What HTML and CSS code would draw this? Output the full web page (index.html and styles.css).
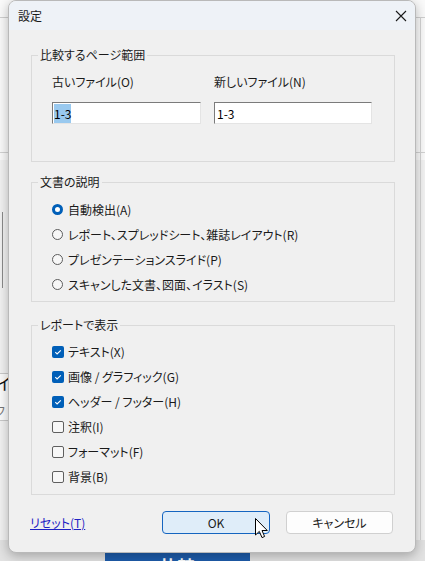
FILE: index.html
```html
<!DOCTYPE html>
<html lang="ja">
<head>
<meta charset="utf-8">
<title>設定</title>
<link rel="stylesheet" href="styles.css">
</head>
<body>
<div class="desk">
  <div class="bg bg-top-left"></div>
  <div class="bg bg-line-l1"></div>
  <div class="bg bg-line-l2"></div>
  <div class="bg bg-dash"></div>
  <div class="bg bg-band"></div>
  <div class="bg bg-glyph1">イ</div>
  <div class="bg bg-glyph2">フ</div>
  <div class="bg bg-vline-r"></div>
  <div class="bg bg-bottom"></div>
  <div class="bg bg-compare">比較</div>

  <div class="dialog">
    <div class="titlebar">
      <span class="title">設定</span>
      <svg class="close" width="12" height="12" viewBox="0 0 12 12"><path d="M1 1L11 11M11 1L1 11" stroke="#1a1a1a" stroke-width="1.1" fill="none"/></svg>
    </div>
    <div class="content">
      <fieldset class="group group-range">
        <legend>比較するページ範囲</legend>
        <div class="range-grid">
          <div class="range-col col-old">
            <div class="field-label">古いファイル(O)</div>
            <div class="textbox"><span class="sel">1-3</span></div>
          </div>
          <div class="range-col col-new">
            <div class="field-label">新しいファイル(N)</div>
            <div class="textbox">1-3</div>
          </div>
        </div>
      </fieldset>

      <fieldset class="group group-desc">
        <legend>文書の説明</legend>
        <div class="option"><span class="radio checked"></span><span>自動検出(A)</span></div>
        <div class="option"><span class="radio"></span><span>レポート、スプレッドシート、雑誌レイアウト(R)</span></div>
        <div class="option"><span class="radio"></span><span>プレゼンテーションスライド(P)</span></div>
        <div class="option"><span class="radio"></span><span>スキャンした文書、図面、イラスト(S)</span></div>
      </fieldset>

      <fieldset class="group group-report">
        <legend>レポートで表示</legend>
        <div class="option"><span class="check checked"><svg width="12" height="12" viewBox="0 0 12 12"><path d="M3.3 6.2L5.1 8L8.8 4.3" stroke="#fff" stroke-width="1.1" fill="none"/></svg></span><span>テキスト(X)</span></div>
        <div class="option"><span class="check checked"><svg width="12" height="12" viewBox="0 0 12 12"><path d="M3.3 6.2L5.1 8L8.8 4.3" stroke="#fff" stroke-width="1.1" fill="none"/></svg></span><span>画像 / グラフィック(G)</span></div>
        <div class="option"><span class="check checked"><svg width="12" height="12" viewBox="0 0 12 12"><path d="M3.3 6.2L5.1 8L8.8 4.3" stroke="#fff" stroke-width="1.1" fill="none"/></svg></span><span>ヘッダー / フッター(H)</span></div>
        <div class="option"><span class="check"></span><span>注釈(I)</span></div>
        <div class="option"><span class="check"></span><span>フォーマット(F)</span></div>
        <div class="option"><span class="check"></span><span>背景(B)</span></div>
      </fieldset>
    </div>
    <div class="footer">
      <a class="reset" href="#">リセット(T)</a>
      <div class="buttons">
        <div class="btn btn-ok">OK</div>
        <div class="btn btn-cancel">キャンセル</div>
      </div>
    </div>
  </div>

  <svg class="cursor" width="14" height="22" viewBox="0 0 14 22"><path d="M0.5 0.5L0.5 17L4.3 13.4L7 19.6L9.6 18.5L7 12.5L12.3 12.5Z" fill="#fff" stroke="#000" stroke-width="1" stroke-linejoin="round"/></svg>
</div>
</body>
</html>
```
FILE: styles.css
```css
* { box-sizing: border-box; }

html, body {
  margin: 0;
  padding: 0;
}

body {
  width: 425px;
  height: 561px;
  overflow: hidden;
  background: #f2f2f2;
  font-family: "Noto Sans CJK JP", "Noto Sans", sans-serif;
  font-size: 12px;
  color: #1a1a1a;
  font-feature-settings: "palt" 1;
}

.desk {
  position: relative;
  width: 425px;
  height: 561px;
  padding-left: 8px;
}

/* ---------- background app (behind the dialog) ---------- */
.bg { position: absolute; }
.bg-top-left { left: 0; top: 0; width: 425px; height: 160px; background: #fafafa; }
.bg-line-l1 { left: 0; top: 17px; width: 425px; height: 1px; background: #cfcfcf; }
.bg-line-l2 { left: 0; top: 152px; width: 425px; height: 1px; background: #d2d2d2; }
.bg-dash { left: 2px; top: 212px; width: 1px; height: 76px; background: #8a8a8a; }
.bg-band { left: 0; top: 373px; width: 20px; height: 48px; background: #fbfbfb; border-top: 1px solid #c9c9c9; border-bottom: 1px solid #c9c9c9; }
.bg-glyph1 { left: -4px; top: 372px; font-size: 17px; line-height: 22px; color: #111; }
.bg-glyph2 { left: -5px; top: 403px; font-size: 12px; line-height: 16px; color: #777; }
.bg-vline-r { left: 420px; top: 17px; width: 1px; height: 540px; background: #d4d4d4; }
.bg-bottom { left: 0; top: 540px; width: 425px; height: 21px; background: #e2e2e2; }
.bg-compare {
  left: 105px; top: 540px; width: 145px; height: 40px;
  background: #1d5cab; color: #fff;
  font-size: 17px; line-height: 20px; text-align: center;
  padding-top: 16px; font-weight: bold;
}

/* ---------- dialog window ---------- */
.dialog {
  position: relative;
  z-index: 1;
  width: 408px;
  height: 553px;
  background: #f0f0f0;
  border: 1px solid #b9b9b9;
  border-radius: 8px;
  overflow: hidden;
  box-shadow: 0 3px 12px rgba(0, 0, 0, 0.28);
  display: flex;
  flex-direction: column;
}

.titlebar {
  height: 29px;
  flex: none;
  background: #eef2f7;
  display: flex;
  align-items: center;
  justify-content: space-between;
  padding: 0 8px 0 9px;
}
.title { font-size: 12px; line-height: 16px; color: #1a1a1a; }
.close { display: block; margin-top: 1px; }

.content {
  padding: 0 21px 0 22px;
}

.group {
  margin: 0;
  width: 364px;
  min-inline-size: 0;
  border: 1px solid #dadada;
  padding: 0;
}
.group legend {
  margin-left: 6px;
  padding: 0 2px;
  line-height: 16px;
  font-size: 12px;
  color: #1a1a1a;
}

.group-range { margin-top: 17px; padding-top: 11px; padding-bottom: 37px; }
.group-desc { margin-top: 12px; padding-top: 7px; padding-bottom: 4px; }
.group-report { margin-top: 15px; padding-top: 6px; padding-bottom: 5px; }

.range-grid {
  display: grid;
  grid-template-columns: 149px 158px;
  column-gap: 13px;
  padding-left: 20px;
}
.field-label { line-height: 16px; }
.textbox {
  margin-top: 12px;
  height: 22px;
  background: #fff;
  border-top: 1px solid #7b7b7b;
  border-left: 1px solid #7b7b7b;
  border-right: 1px solid #e4e4e4;
  border-bottom: 1px solid #e4e4e4;
  padding: 2px 2px 0 2px;
  line-height: 17px;
  font-size: 12px;
  color: #000;
}
.sel { background: #99c9ef; padding: 1px 0 1px 0; margin-left: -1px; }

.option {
  display: flex;
  align-items: center;
  height: 25px;
  line-height: 16px;
  padding-left: 20px;
}

.radio {
  flex: none;
  width: 11px;
  height: 11px;
  border-radius: 50%;
  border: 1px solid #5c5c5c;
  background: #f7f7f7;
  margin-right: 5px;
}
.radio.checked {
  background: #fff;
  border: 3px solid #005fb8;
}

.check {
  flex: none;
  width: 12px;
  height: 12px;
  border-radius: 2px;
  border: 1px solid #5f5f5f;
  background: #f7f7f7;
  margin-right: 4px;
  display: flex;
}
.check.checked {
  border: none;
  background: #005fb8;
}
.check svg { display: block; }

.footer {
  margin-top: 16px;
  padding: 0 22px 0 21px;
  display: flex;
  align-items: center;
  justify-content: space-between;
}
.reset {
  color: #1f22c4;
  text-decoration: underline;
  font-size: 12px;
  line-height: 16px;
}
.buttons { display: flex; gap: 16px; }
.btn {
  height: 23px;
  border-radius: 4px;
  display: flex;
  align-items: center;
  justify-content: center;
  font-size: 12px;
  line-height: 16px;
  color: #1a1a1a;
}
.btn-ok { width: 108px; background: #dfedf9; border: 1px solid #1565c0; }
.btn-cancel { width: 107px; background: #fdfdfd; border: 1px solid #d0d0d0; }

.cursor {
  position: absolute;
  z-index: 2;
  left: 255px;
  top: 518px;
}
```
